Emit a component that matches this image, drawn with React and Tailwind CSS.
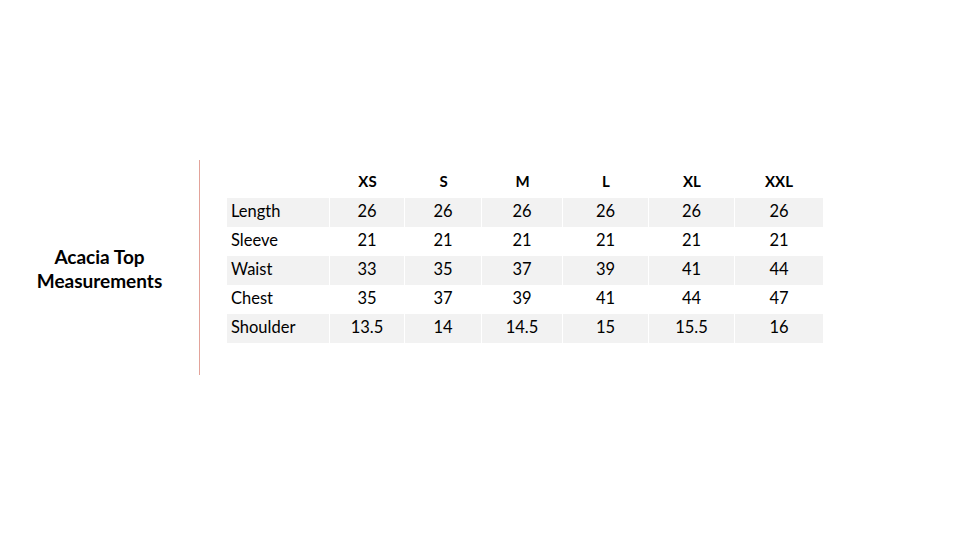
import React from "react";

const sizes = ["XS", "S", "M", "L", "XL", "XXL"];
const widths = ["w-[75px]", "w-[77px]", "w-[81px]", "w-[86px]", "w-[86px]", "w-[88px]"];
const rows = [
  ["Length", "26", "26", "26", "26", "26", "26"],
  ["Sleeve", "21", "21", "21", "21", "21", "21"],
  ["Waist", "33", "35", "37", "39", "41", "44"],
  ["Chest", "35", "37", "39", "41", "44", "47"],
  ["Shoulder", "13.5", "14", "14.5", "15", "15.5", "16"],
];

export default function App() {
  return (
    <div
      className="w-[960px] h-[540px] bg-white text-black overflow-hidden"
      style={{ fontFamily: "Lato, 'Open Sans', sans-serif" }}
    >
      <div className="flex pt-[160px]">
        <div className="w-[199px] h-[215px] flex items-center justify-center">
          <div className="text-[19px] font-bold leading-[24px] text-center pt-[3px]">
            Acacia Top
            <br />
            Measurements
          </div>
        </div>
        <div className="w-px h-[215px] bg-[#e3a39a]" />
        <div className="pl-[27px] pt-[8px]">
          <div className="flex h-[29px] items-center text-[15px] font-bold pb-[2px]">
            <div className="w-[103px]" />
            {sizes.map((s, i) => (
              <div key={s} className={`${widths[i]} text-center`}>
                {s}
              </div>
            ))}
          </div>
          {rows.map((r, ri) => (
            <div
              key={r[0]}
              className={`flex h-[29px] items-center text-[16.5px] ${ri === 0 ? "mt-px" : ""}`}
            >
              <div
                className={`w-[102px] h-full flex items-center pl-[4px] pb-[3px] mr-px ${
                  ri % 2 === 0 ? "bg-[#f2f2f2]" : ""
                }`}
              >
                {r[0]}
              </div>
              {r.slice(1).map((v, i) => (
                <div
                  key={i}
                  className={`${widths[i]} h-full flex items-center justify-center pb-[3px] ${
                    i < 5 ? "border-r border-white" : ""
                  } ${ri % 2 === 0 ? "bg-[#f2f2f2]" : ""}`}
                >
                  {v}
                </div>
              ))}
            </div>
          ))}
        </div>
      </div>
    </div>
  );
}
